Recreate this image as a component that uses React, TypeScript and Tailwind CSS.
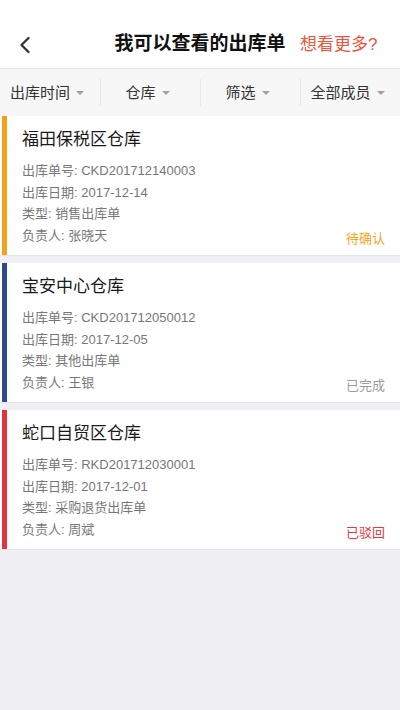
import { ChevronLeft } from 'lucide-react'

const filters = ['出库时间', '仓库', '筛选', '全部成员']

const orders = [
  {
    warehouse: '福田保税区仓库',
    no: 'CKD201712140003',
    date: '2017-12-14',
    type: '销售出库单',
    owner: '张晓天',
    status: '待确认',
    bar: 'bg-[#f5a01a]',
    statusColor: 'text-[#f5a623]',
  },
  {
    warehouse: '宝安中心仓库',
    no: 'CKD201712050012',
    date: '2017-12-05',
    type: '其他出库单',
    owner: '王银',
    status: '已完成',
    bar: 'bg-[#2d4a8c]',
    statusColor: 'text-[#9b9b9b]',
  },
  {
    warehouse: '蛇口自贸区仓库',
    no: 'RKD201712030001',
    date: '2017-12-01',
    type: '采购退货出库单',
    owner: '周斌',
    status: '已驳回',
    bar: 'bg-[#e2323f]',
    statusColor: 'text-[#e8383d]',
  },
]

export default function App() {
  return (
    <div className="flex min-h-[710px] w-[400px] flex-col bg-[#efeff4] font-['Liberation_Sans','Noto_Sans_CJK_SC',sans-serif]">
      <header className="relative flex h-[69px] items-end justify-center border-b border-[#e6e6e6] bg-white pb-[10px]">
        <ChevronLeft className="absolute left-[11px] top-[31px] h-[28px] w-[28px] text-[#333]" strokeWidth={2} />
        <h1 className="text-[19px] font-semibold leading-[28px] text-[#111]">我可以查看的出库单</h1>
        <span className="absolute left-[300px] top-[31px] text-[17px] leading-[28px] text-[#f0533a]">想看更多?</span>
      </header>

      <nav className="grid h-[47px] grid-cols-4 bg-[#f7f7f7]">
        {filters.map((f, i) => (
          <div key={f} className={`my-[10px] flex items-center justify-center pr-[6px] ${i > 0 ? 'border-l border-[#e8e8e8]' : ''}`}>
            <span className="text-[15px] leading-[20px] text-[#333]">{f}</span>
            <span className="ml-[6px] h-0 w-0 border-x-[4px] border-t-[4px] border-x-transparent border-t-[#a0a0a0]" />
          </div>
        ))}
      </nav>

      <main className="flex flex-col gap-[8px]">
        {orders.map((o) => (
          <article key={o.no} className="flex h-[139px] bg-white pl-[2px] shadow-[0_1px_1px_rgba(0,0,0,0.04)]">
            <span className={`w-[5px] self-stretch ${o.bar}`} />
            <div className="flex flex-1 flex-col pl-[15px] pr-[15px] pt-[12px]">
              <h2 className="text-[17px] leading-[24px] text-[#1a1a1a]">{o.warehouse}</h2>
              <div className="mt-[8px] flex flex-col text-[13px] leading-[21.5px] text-[#777]">
                <p>出库单号: {o.no}</p>
                <p>出库日期: {o.date}</p>
                <p>类型: {o.type}</p>
                <div className="flex items-end justify-between">
                  <p>负责人: {o.owner}</p>
                  <span className={`relative top-[3px] ${o.statusColor}`}>{o.status}</span>
                </div>
              </div>
            </div>
          </article>
        ))}
      </main>
    </div>
  )
}
